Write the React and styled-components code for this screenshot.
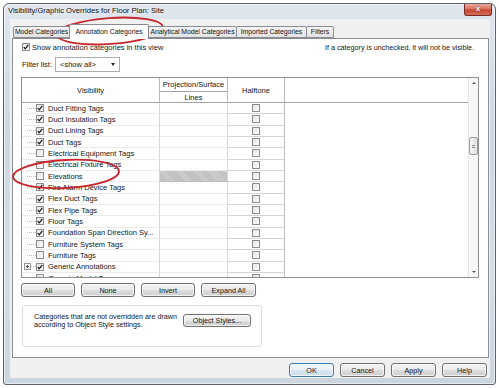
import React from "react";
import styled, { createGlobalStyle } from "styled-components";

const GlobalStyle = createGlobalStyle`
  html, body { margin: 0; padding: 0; background: #fff; }
  body {
    font-family: "Liberation Sans", Arial, sans-serif;
    font-size: 7.5px;
    color: #161616;
  }
  * { box-sizing: border-box; }
`;

const rows = [
  { name: "Duct Fitting Tags", on: true },
  { name: "Duct Insulation Tags", on: true },
  { name: "Duct Lining Tags", on: true },
  { name: "Duct Tags", on: true },
  { name: "Electrical Equipment Tags", on: false },
  { name: "Electrical Fixture Tags", on: false },
  { name: "Elevations", on: false, grey: true },
  { name: "Fire Alarm Device Tags", on: true },
  { name: "Flex Duct Tags", on: true },
  { name: "Flex Pipe Tags", on: true },
  { name: "Floor Tags", on: true },
  { name: "Foundation Span Direction Sy...", on: true },
  { name: "Furniture System Tags", on: false },
  { name: "Furniture Tags", on: false },
  { name: "Generic Annotations", on: true, expand: true },
  { name: "Generic Model Tags", on: false },
];

const tabs = [
  { label: "Model Categories", w: 57 },
  { label: "Annotation Categories", w: 80, active: true },
  { label: "Analytical Model Categories", w: 89 },
  { label: "Imported Categories", w: 71 },
  { label: "Filters", w: 28 },
];

const Stage = styled.div`
  position: relative;
  width: 499px;
  height: 388px;
  padding: 3px 0 0 3px;
  overflow: hidden;
`;

const Window = styled.div`
  width: 493px;
  height: 382px;
  border: 1px solid #5a636e;
  border-radius: 6px 6px 3px 3px;
  background: linear-gradient(180deg, #dfe6ee 0%, #cdd7e2 35%, #d6dee7 70%, #cbd5df 100%);
  box-shadow: inset 0 0 0 1px rgba(255, 255, 255, 0.55);
  display: flex;
  flex-direction: column;
`;

const TitleBar = styled.div`
  height: 15px;
  display: flex;
  align-items: flex-start;
  justify-content: space-between;
  padding: 0 3px 0 4px;
`;

const Title = styled.div`
  line-height: 14px;
  font-size: 7.6px;
  color: #111;
  text-shadow: 0 0 5px rgba(255, 255, 255, 0.95);
`;

const CloseButton = styled.div`
  width: 28px;
  height: 12px;
  border: 1px solid #7a2a22;
  border-top: none;
  border-radius: 0 0 3px 3px;
  background: linear-gradient(180deg, #eaa99a 0%, #d8705c 48%, #c4422e 52%, #d2705a 100%);
  color: #fff;
  font-weight: bold;
  font-size: 8px;
  line-height: 10px;
  text-align: center;
  text-shadow: 0 0 2px #6b1a12;
`;

const Client = styled.div`
  flex: 1;
  margin: 0 5px 6px 6px;
  background: #f0f0f0;
  display: flex;
  flex-direction: column;
  padding: 5px 1px 1px 2px;
`;

const TabStrip = styled.div`
  height: 14px;
  display: flex;
  align-items: flex-end;
  padding-left: 1px;
  position: relative;
  z-index: 1;
`;

const Tab = styled.div`
  width: ${(p) => p.$w}px;
  height: ${(p) => (p.$active ? 15 : 12)}px;
  margin-left: ${(p) => (p.$first ? 0 : -1)}px;
  margin-bottom: ${(p) => (p.$active ? -1 : 0)}px;
  border: 1px solid #898c95;
  border-bottom: ${(p) => (p.$active ? "none" : "1px solid #898c95")};
  border-radius: 2px 2px 0 0;
  background: ${(p) => (p.$active ? "#fff" : "linear-gradient(180deg, #f4f4f4, #e2e2e2)")};
  position: relative;
  z-index: ${(p) => (p.$active ? 2 : 1)};
  display: flex;
  align-items: center;
  justify-content: center;
  white-space: nowrap;
  overflow: hidden;
  line-height: 1;
  font-size: 6.9px;
  letter-spacing: -0.05px;
  padding-top: ${(p) => (p.$active ? 0 : 1)}px;
`;

const Panel = styled.div`
  flex: 1;
  border: 1px solid #898c95;
  background: #fff;
  padding: 3px 9px 0 9px;
  display: flex;
  flex-direction: column;
`;

const TopRow = styled.div`
  height: 10px;
  display: flex;
  align-items: center;
  justify-content: space-between;
`;

const Inline = styled.div`
  display: flex;
  align-items: center;
  gap: ${(p) => p.$gap || 0}px;
`;

const Note = styled.span`
  margin-right: 5px;
  font-size: 7.2px;
`;

const FilterRow = styled.div`
  margin-top: 5px;
  height: 15px;
  display: flex;
  align-items: center;
  gap: 3px;
`;

const Select = styled.div`
  width: 65px;
  height: 15px;
  border: 1px solid #abadb3;
  background: #fff;
  display: flex;
  align-items: center;
  justify-content: space-between;
  padding: 0 4px 0 4px;
`;

const Caret = styled.span`
  width: 0;
  height: 0;
  border-left: 2.5px solid transparent;
  border-right: 2.5px solid transparent;
  border-top: 3px solid #222;
`;

const Table = styled.div`
  margin: 5px 0 0 -1px;
  height: 201px;
  border: 1px solid #8e9093;
  background: #fff;
  display: flex;
`;

const TableMain = styled.div`
  flex: 1;
  display: flex;
  flex-direction: column;
  overflow: hidden;
`;

const HeaderRow = styled.div`
  height: 25px;
  display: flex;
  flex-shrink: 0;
`;

const HeadCell = styled.div`
  width: ${(p) => (p.$w ? `${p.$w}px` : "auto")};
  flex: ${(p) => (p.$w ? "none" : 1)};
  border-right: ${(p) => (p.$w ? "1px solid #b9b9b9" : "none")};
  border-bottom: 1px solid #a3a3a3;
  display: flex;
  align-items: center;
  justify-content: center;
`;

const HeadStack = styled.div`
  width: 68px;
  display: flex;
  flex-direction: column;
  border-right: 1px solid #b9b9b9;
`;

const HeadPart = styled.div`
  height: ${(p) => p.$h}px;
  border-bottom: 1px solid #a3a3a3;
  display: flex;
  align-items: center;
  justify-content: center;
  white-space: nowrap;
`;

const Body = styled.div`
  flex: 1;
  overflow: hidden;
`;

const Row = styled.div`
  height: 11.33px;
  display: flex;
`;

const VisCell = styled.div`
  width: 138px;
  border-right: 1px solid #d6d6d6;
  border-bottom: 1px solid #ebebeb;
  display: flex;
  align-items: center;
  white-space: nowrap;
  overflow: hidden;
`;

const Lead = styled.div`
  width: 14px;
  padding-left: 2px;
  display: flex;
  align-items: center;
  flex-shrink: 0;
`;

const TreeLine = styled.span`
  width: ${(p) => p.$w}px;
  margin-left: ${(p) => p.$ml || 0}px;
  border-top: 1px dotted #bdbdbd;
`;

const Expander = styled.span`
  width: 7px;
  height: 7px;
  border: 1px solid #979797;
  background: linear-gradient(180deg, #fff, #e6e6e6);
  position: relative;
  &::before, &::after {
    content: "";
    position: absolute;
    background: #4a4a4a;
  }
  &::before { left: 1px; right: 1px; top: 2px; height: 1px; }
  &::after { top: 1px; bottom: 1px; left: 2px; width: 1px; }
`;

const Label = styled.span`
  margin-left: 4px;
`;

const ProjCell = styled.div`
  width: 68px;
  border-right: 1px solid #d6d6d6;
  border-bottom: 1px solid ${(p) => (p.$grey ? "#bdbdbd" : "#ebebeb")};
  background: ${(p) =>
    p.$grey
      ? "repeating-linear-gradient(45deg, #bcbcbc 0 1px, #d0d0d0 1px 2px)"
      : "#fff"};
`;

const HalfCell = styled.div`
  width: 57px;
  border-right: 1px solid #bdbdbd;
  border-bottom: 1px solid #d4d4d4;
  display: flex;
  align-items: center;
  justify-content: center;
`;

const Filler = styled.div`
  flex: 1;
`;

const Box = styled.span`
  width: 8px;
  height: 8px;
  flex-shrink: 0;
  border: 1px solid #8c8c8c;
  background: linear-gradient(135deg, #e4e4e4, #fdfdfd);
  display: flex;
  align-items: center;
  justify-content: center;
`;

const Scrollbar = styled.div`
  width: 10px;
  border-left: 1px dotted #d8d8d8;
  background: #f7f7f7;
  display: flex;
  flex-direction: column;
  align-items: center;
`;

const Arrow = styled.div`
  height: 10px;
  display: flex;
  align-items: center;
  justify-content: center;
  &::before {
    content: "";
    border-left: 2px solid transparent;
    border-right: 2px solid transparent;
    ${(p) => (p.$down ? "border-top: 2px solid #555;" : "border-bottom: 2px solid #555;")}
  }
`;

const Track = styled.div`
  flex: 1;
  padding-top: 49px;
`;

const Thumb = styled.div`
  width: 9px;
  height: 18px;
  border: 1px solid #9a9a9a;
  border-radius: 2px;
  background: linear-gradient(90deg, #f6f6f6, #e2e2e2);
  display: flex;
  flex-direction: column;
  align-items: center;
  justify-content: center;
  gap: 1px;
  &::before, &::after {
    content: "";
    width: 3px;
    height: 1px;
    background: #8a8a8a;
  }
`;

const ButtonRow = styled.div`
  margin: 5px 0 0 -1px;
  display: flex;
  gap: 6px;
`;

const Button = styled.div`
  width: ${(p) => p.$w}px;
  height: ${(p) => p.$h || 14}px;
  margin-top: ${(p) => p.$mt || 0}px;
  border: 1px solid ${(p) => (p.$default ? "#3c7fb1" : "#707070")};
  border-radius: 3px;
  background: ${(p) =>
    p.$default
      ? "linear-gradient(180deg, #f3f8fc 0%, #e8f0f7 50%, #d9e6f1 51%, #cddeed 100%)"
      : "linear-gradient(180deg, #f3f3f3 0%, #ebebeb 50%, #dddddd 51%, #cfcfcf 100%)"};
  box-shadow: inset 0 0 0 1px rgba(255, 255, 255, 0.7);
  display: flex;
  align-items: center;
  justify-content: center;
  white-space: nowrap;
  font-size: 7.2px;
`;

const GroupBox = styled.div`
  margin-top: 8px;
  width: 240px;
  height: 42px;
  border: 1px solid #d5dfe5;
  border-radius: 3px;
  display: flex;
  align-items: flex-start;
  justify-content: space-between;
  padding: 7px 10px 0 11px;
`;

const GroupText = styled.div`
  line-height: 8px;
  white-space: nowrap;
  font-size: 7.2px;
`;

const Footer = styled.div`
  margin-top: 5px;
  display: flex;
  justify-content: flex-end;
  gap: 6px;
  padding-right: 2px;
`;

const Overlay = styled.svg`
  position: absolute;
  left: 0;
  top: 0;
  pointer-events: none;
`;

function Check({ on }) {
  return (
    <Box>
      {on && (
        <svg width="6" height="6" viewBox="0 0 6 6">
          <path d="M0.7 3.1 L2.3 4.8 L5.3 0.9" fill="none" stroke="#1d1d1d" strokeWidth="1.3" />
        </svg>
      )}
    </Box>
  );
}

export default function App() {
  return (
    <>
      <GlobalStyle />
      <Stage>
        <Window>
          <TitleBar>
            <Title>Visibility/Graphic Overrides for Floor Plan: Site</Title>
            <CloseButton>x</CloseButton>
          </TitleBar>
          <Client>
            <TabStrip>
              {tabs.map((t, i) => (
                <Tab key={t.label} $w={t.w} $active={t.active} $first={i === 0}>
                  {t.label}
                </Tab>
              ))}
            </TabStrip>
            <Panel>
              <TopRow>
                <Inline $gap={2}>
                  <Check on />
                  <span>Show annotation categories in this view</span>
                </Inline>
                <Note>If a category is unchecked, it will not be visible.</Note>
              </TopRow>
              <FilterRow>
                <span>Filter list:</span>
                <Select>
                  <span>&lt;show all&gt;</span>
                  <Caret />
                </Select>
              </FilterRow>
              <Table>
                <TableMain>
                  <HeaderRow>
                    <HeadCell $w={138}>Visibility</HeadCell>
                    <HeadStack>
                      <HeadPart $h={14}>Projection/Surface</HeadPart>
                      <HeadPart $h={11}>Lines</HeadPart>
                    </HeadStack>
                    <HeadCell $w={57}>Halftone</HeadCell>
                    <HeadCell />
                  </HeaderRow>
                  <Body>
                    {rows.map((r) => (
                      <Row key={r.name}>
                        <VisCell>
                          <Lead>
                            {r.expand ? (
                              <>
                                <Expander />
                                <TreeLine $w={5} />
                              </>
                            ) : (
                              <TreeLine $w={9} $ml={3} />
                            )}
                          </Lead>
                          <Check on={r.on} />
                          <Label>{r.name}</Label>
                        </VisCell>
                        <ProjCell $grey={r.grey} />
                        <HalfCell>
                          <Check on={false} />
                        </HalfCell>
                        <Filler />
                      </Row>
                    ))}
                  </Body>
                </TableMain>
                <Scrollbar>
                  <Arrow />
                  <Track>
                    <Thumb />
                  </Track>
                  <Arrow $down />
                </Scrollbar>
              </Table>
              <ButtonRow>
                <Button $w={54}>All</Button>
                <Button $w={54}>None</Button>
                <Button $w={54}>Invert</Button>
                <Button $w={55}>Expand All</Button>
              </ButtonRow>
              <GroupBox>
                <GroupText>
                  Categories that are not overridden are drawn
                  <br />
                  according to Object Style settings.
                </GroupText>
                <Button $w={68} $h={13} $mt={1}>
                  Object Styles...
                </Button>
              </GroupBox>
            </Panel>
            <Footer>
              <Button $w={45} $default>OK</Button>
              <Button $w={45}>Cancel</Button>
              <Button $w={45}>Apply</Button>
              <Button $w={45}>Help</Button>
            </Footer>
          </Client>
        </Window>
        <Overlay width="499" height="388" viewBox="0 0 499 388">
          <ellipse cx="110" cy="31" rx="53" ry="13" transform="rotate(-4 110 31)" fill="none" stroke="#c7262c" strokeWidth="1.8" />
          <ellipse cx="66" cy="174" rx="53" ry="14" transform="rotate(-3 66 174)" fill="none" stroke="#c7262c" strokeWidth="1.8" />
        </Overlay>
      </Stage>
    </>
  );
}
